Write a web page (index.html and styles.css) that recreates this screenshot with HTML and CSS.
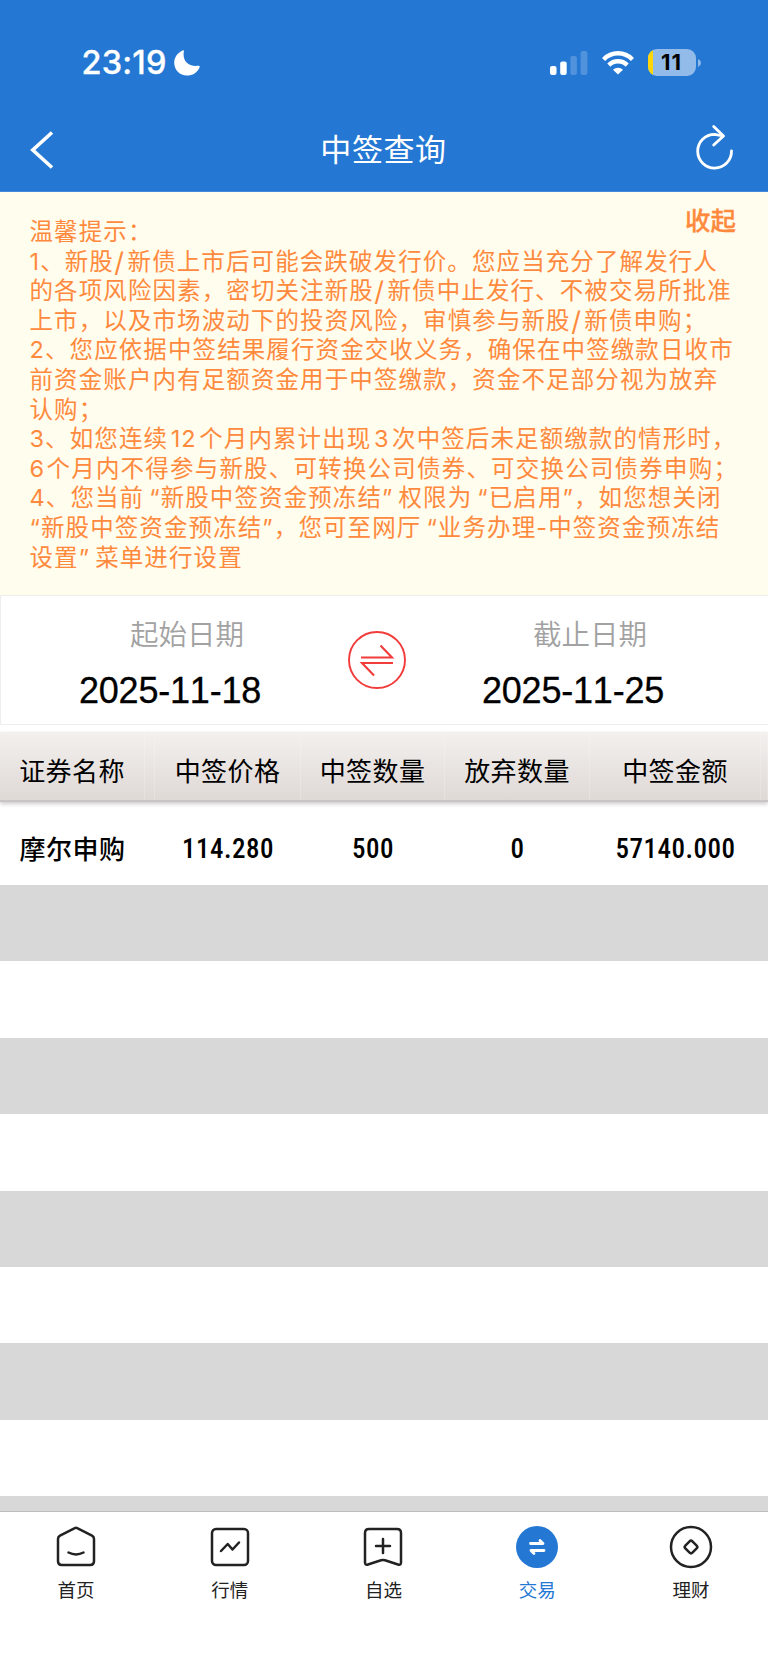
FILE: index.html
```html
<!DOCTYPE html>
<html lang="zh-CN">
<head>
<meta charset="utf-8">
<title>中签查询</title>
<link rel="stylesheet" href="styles.css">
</head>
<body>
<div class="screen">
  <header class="top">
    <div class="status">
      <span class="time">23:19</span>
      <svg class="moon" width="26" height="26" viewBox="0 0 26 26"><path d="M8.6.4C9.3-.1 10.2.3 9.900 1.300C8.200 9.500 13 17 24.300 15.800C25.500 15.600 26 16.300 25.600 17.200C23.500 22.500 18.500 25.600 12.900 25.600C5.800 25.600 .2 20 .2 12.800C.2 7.500 3.400 2.700 8.600.4Z" fill="#fff"/></svg>
      <svg class="signal" width="38" height="24" viewBox="0 0 38 24"><g fill="#fff"><rect x="0" y="15" width="6.500" height="9" rx="2"/><rect x="10.200" y="10.500" width="6.500" height="13.500" rx="2"/><g opacity=".2"><rect x="20.400" y="5" width="6.500" height="19" rx="2"/><rect x="30.600" y="0" width="6.800" height="24" rx="2"/></g></g></svg>
      <svg class="wifi" width="32" height="24" viewBox="0 0 32 24"><g fill="none" stroke="#fff" stroke-width="4.400"><path d="M1.500 8.500C9.500.2 22.500.2 30.500 8.500"/><path d="M6.800 14.100C12 9 20 9 25.200 14.100"/></g><path d="M16 23.600L11 18.700C13.800 16 18.200 16 21 18.700Z" fill="#fff"/></svg>
      <span class="battery"><span class="charge"></span>11</span>
      <svg class="cap" width="3" height="8" viewBox="0 0 3 8"><path d="M0 0Q3 1.500 3 4Q3 6.500 0 8Z" fill="#92bbea"/></svg>
    </div>
    <div class="nav">
      <svg class="back" width="25" height="40" viewBox="0 0 25 40"><path d="M23 2.500L3.800 20L23 37.500" fill="none" stroke="#fff" stroke-width="3.600"/></svg>
      <h1>中签查询</h1>
      <svg class="refresh" width="38" height="46" viewBox="0 0 38 46"><g fill="none" stroke="#fff" stroke-width="2.800" stroke-linecap="round" stroke-linejoin="round"><path d="M35.500 27A16.900 16.900 0 1 1 18.600 10.300L27 12"/><path d="M17.700 2.500L27.500 12L17.700 21"/></g></svg>
    </div>
  </header>

  <section class="notice">
    <span class="fold">收起</span>
    <p>温馨提示：</p>
    <p>1、新股<b>/</b>新债上市后可能会跌破发行价。您应当充分了解发行人</p>
    <p>的各项风险因素，密切关注新股<b>/</b>新债中止发行、不被交易所批准</p>
    <p>上市，以及市场波动下的投资风险，审慎参与新股<b>/</b>新债申购；</p>
    <p>2、您应依据中签结果履行资金交收义务，确保在中签缴款日收市</p>
    <p>前资金账户内有足额资金用于中签缴款，资金不足部分视为放弃</p>
    <p>认购；</p>
    <p>3、如您连续<i>12</i>个月内累计出现<i>3</i>次中签后未足额缴款的情形时，</p>
    <p class="loose"><span class="lead">6</span>个月内不得参与新股、可转换公司债券、可交换公司债券申购；</p>
    <p>4、您当前<i></i>“新股中签资金预冻结”<i></i>权限为<i></i>“已启用”，如您想关闭</p>
    <p>“新股中签资金预冻结”，您可至网厅<i></i>“业务办理-中签资金预冻结</p>
    <p>设置”<i></i>菜单进行设置</p>
  </section>

  <section class="dates">
    <div class="date"><span class="label">起始日期</span><span class="value">2025-11-18</span></div>
    <svg class="swap" width="58" height="58" viewBox="0 0 58 58"><g fill="none" stroke="#f23c3c"><circle cx="29" cy="29" r="28" stroke-width="1.900"/><path d="M13 26.500H44L32.500 14.500M45 32H14L26 44.500" stroke-width="2.100"/></g></svg>
    <div class="date"><span class="label">截止日期</span><span class="value">2025-11-25</span></div>
  </section>

  <section class="table">
    <div class="row head"><span>证券名称</span><span></span><span>中签价格</span><span>中签数量</span><span>放弃数量</span><span>中签金额</span><span></span></div>
    <div class="row data"><span class="name">摩尔申购</span><span></span><span>114.280</span><span>500</span><span>0</span><span>57140.000</span><span></span></div>
    <div class="stripes"></div>
  </section>

  <nav class="tabs">
    <a><svg width="44" height="44" viewBox="0 0 44 44"><g fill="none" stroke="#222" stroke-width="2.500" stroke-linecap="round" stroke-linejoin="round"><path d="M20.800 3.100Q22 2.400 23.200 3.100L38 10.700Q40 11.800 40 14V36.300Q40 40 36.300 40H7.700Q4 40 4 36.300V14Q4 11.800 6 10.700Z"/><path d="M14.500 27.500Q22 31.300 29.500 27.500"/></g></svg>首页</a>
    <a><svg width="44" height="44" viewBox="0 0 44 44"><g fill="none" stroke="#222" stroke-width="2.500" stroke-linecap="round" stroke-linejoin="round"><rect x="4" y="4" width="36" height="36" rx="4"/><path d="M13 26L19.700 19L24.500 24.500L31 17.500"/></g></svg>行情</a>
    <a><svg width="44" height="44" viewBox="0 0 44 44"><g fill="none" stroke="#222" stroke-width="2.500" stroke-linecap="round" stroke-linejoin="round"><path d="M8 4H36Q40 4 40 8V37.500Q40 40.500 37 39.500L24 35.300Q22 34.700 20 35.300L7 39.500Q4 40.500 4 37.500V8Q4 4 8 4Z"/><path d="M15 21H29M22 14V28"/></g></svg>自选</a>
    <a class="on"><svg width="44" height="44" viewBox="0 0 44 44"><circle cx="22" cy="22" r="21" fill="#2478d4"/><path d="M15.500 18.500H28L25 15.500M29 25.500H16L19 28.500" fill="none" stroke="#fff" stroke-width="2.800" stroke-linecap="round" stroke-linejoin="round"/></svg>交易</a>
    <a><svg width="44" height="44" viewBox="0 0 44 44"><g fill="none" stroke="#222" stroke-width="2.500"><circle cx="22" cy="22" r="20"/><rect x="17" y="17" width="10" height="10" rx="2" transform="rotate(45 22 22)"/></g></svg>理财</a>
  </nav>
</div>
</body>
</html>
```
FILE: styles.css
```css
* { box-sizing: border-box; }
body { margin: 0; background: #fff; font-family: Inter, "Noto Sans CJK SC", sans-serif; color: #000; }
h1, p { margin: 0; font-weight: 400; }
svg { display: block; flex: none; }
.screen { width: 768px; height: 1670px; display: flex; flex-direction: column; overflow: hidden; }

.top { height: 192px; background: #2478d4; color: #fff; flex: none; border-bottom: 1px solid #438bd9; }
.status { height: 108px; padding: 17px 67px 0 81.500px; display: flex; align-items: center; }
.time { font-size: 32.500px; font-weight: 500; -webkit-text-stroke: .3px #fff; letter-spacing: .2px; width: 92px; white-space: nowrap; }
.signal { margin-left: auto; }
.wifi { margin-left: 14px; }
.battery { position: relative; width: 48px; height: 27px; margin-left: 14px; border-radius: 9px; background: #92bbea; color: #000; overflow: hidden; font-size: 22px; line-height: 27px; font-weight: 700; text-align: center; letter-spacing: .9px; padding-right: 1px; }
.charge { position: absolute; left: 0; top: 0; width: 5px; height: 27px; background: #ffd60a; }
.cap { margin-left: 2px; }
.nav { height: 83px; padding: 0 34px 0 29px; display: flex; align-items: center; justify-content: space-between; }
.nav h1 { font-size: 31px; letter-spacing: .6px; padding: 0 0 4px 17px; }
.refresh { margin-top: -6px; }

.notice { position: relative; height: 404px; padding: 25px 0 0 29.500px; background: #fffdee; color: #ff8a3d; flex: none; border-bottom: 1px solid #f0eee6; }
.notice p { height: 29.600px; line-height: 29.600px; font-size: 23.500px; letter-spacing: 1.100px; white-space: nowrap; }
.notice i { font-style: normal; margin: 0 2.500px; }
.notice b { display: inline-block; font-weight: 400; margin: 0 2.500px 0 1.500px; transform: scale(1.15) translateY(1px); }
.notice .lead { display: inline-block; width: 17px; }
.notice .loose { letter-spacing: 1.200px; }
.fold { position: absolute; right: 32px; top: 12px; font-size: 25.500px; line-height: 34px; font-weight: 500; -webkit-text-stroke: .3px #ff8a3d; }

.dates { height: 129px; padding-left: 1.500px; border: solid #eee; border-width: 0 0 1px 1px; display: flex; align-items: center; flex: none; }
.date { width: 345px; padding-top: 7px; display: flex; flex-direction: column; align-items: center; }
.date:first-child { padding-left: 24px; }
.date:last-child { padding-left: 24px; }
.label { font-size: 28.500px; line-height: 40px; color: #a2a2a2; font-weight: 350; }
.value { font: 36px/44px "Liberation Sans", sans-serif; font-kerning: none; margin: 14px 34px 0 0; letter-spacing: -.200px; -webkit-text-stroke: .3px #000; }

.table { flex: 1; min-height: 0; display: flex; flex-direction: column; padding-top: 7px; }
.row { display: grid; grid-template-columns: 145px 10px 146px 144px 145px 171px 7px; align-items: center; text-align: center; flex: none; }
.head { height: 70px; background: linear-gradient(#f3f0ee, #dfd9d6); border-bottom: 2px solid #c8c4c3; box-shadow: 0 2px 4px #ccc; font-size: 26px; letter-spacing: .4px; }
.head span { height: 68px; line-height: 79px; border-right: 1px solid #fff3; }
.data { height: 83px; font-family: Roboto, "Noto Sans CJK SC", sans-serif; font-size: 27px; font-stretch: 85%; font-weight: 500; padding-top: 11px; letter-spacing: .5px; }
.data .name { letter-spacing: .5px; font-size: 26px; padding-bottom: 3px; }
.stripes { flex: 1; background: repeating-linear-gradient(#d8d8d8 0 76.400px, #fff 76.400px 152.800px); }

.tabs { height: 159px; flex: none; border-top: 1px solid #bdbdbd; background: #fff; display: flex; padding: 13px 0 0; margin-left: -1px; width: 769px; }
.tabs a { flex: 1; display: flex; flex-direction: column; align-items: center; gap: 8px; font-size: 18.500px; line-height: 26px; color: #222; }
.tabs .on { color: #2478d4; }
```
